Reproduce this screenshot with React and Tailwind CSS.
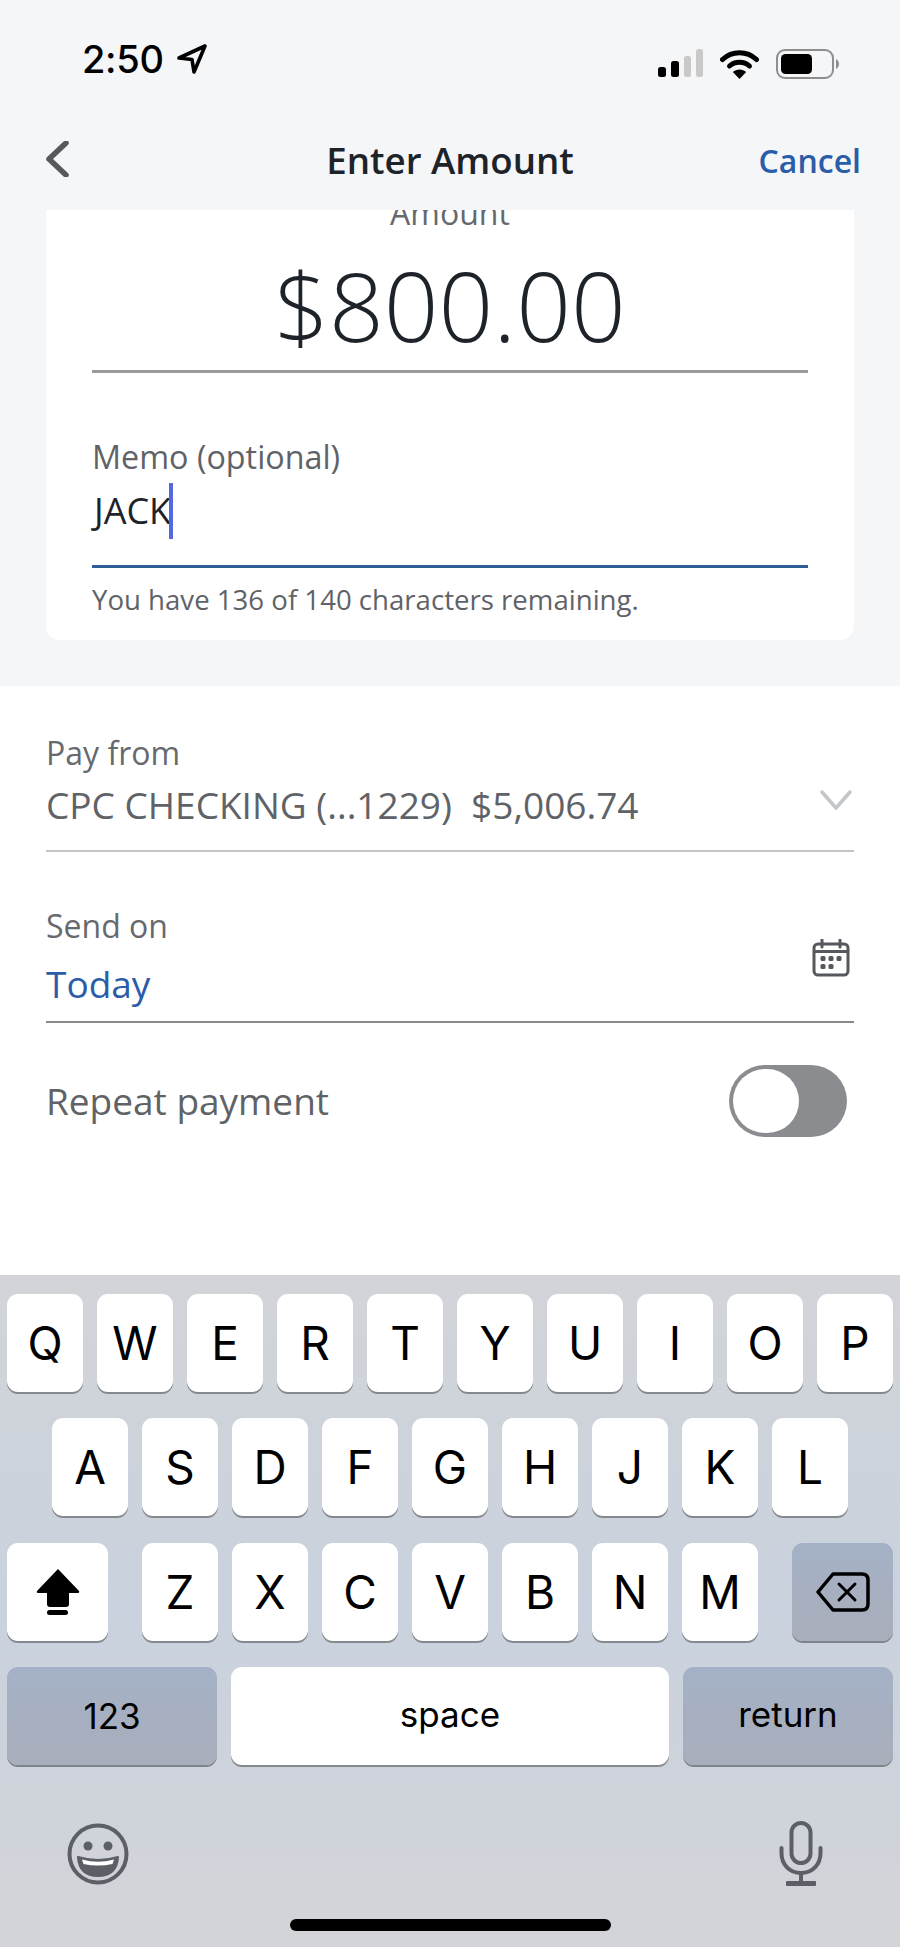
const OS = "font-['Open_Sans',sans-serif]";
const IN = "font-['Inter',sans-serif]";

function Key({ label, className = "w-[76px]" }) {
  return (
    <div className={`${className} h-[98px] shrink-0 flex items-center justify-center rounded-[11px] bg-white shadow-[0_2px_0_#85888d] text-[46px] leading-none text-black ${IN}`}>
      {label}
    </div>
  );
}

function FnKey({ children, className = "" }) {
  return (
    <div className={`${className} h-[98px] shrink-0 flex items-center justify-center rounded-[11px] bg-gradient-to-b from-[#a4b1c6] to-[#a9aebb] shadow-[0_2px_0_#7f838b] text-black ${IN}`}>
      {children}
    </div>
  );
}

function StatusBar() {
  return (
    <div className="h-[105px] flex items-end justify-between pl-[82px] pr-[61px] pb-[26px]">
      <div className="flex items-center gap-[13px]">
        <span className={`text-[38px] leading-[40px] font-medium text-black tracking-[-0.3px] ${IN}`}>2:50</span>
        <svg width="30" height="30" viewBox="0 0 30 30" fill="none">
          <path d="M2 14 L28 2 L17 28 L15 15.5 Z" stroke="#000" strokeWidth="3.6" strokeLinejoin="round" />
        </svg>
      </div>
      <div className="flex items-center gap-[17px]">
        <svg width="45" height="30" viewBox="0 0 45 30">
          <rect x="0" y="18" width="8" height="10" rx="2.5" fill="#000" />
          <rect x="13" y="12" width="8" height="16" rx="2.5" fill="#000" />
          <rect x="26" y="7" width="7" height="21" rx="2.5" fill="#c9c9c9" />
          <rect x="38" y="0" width="7" height="28" rx="2.5" fill="#c9c9c9" />
        </svg>
        <svg width="39" height="30" viewBox="0 0 39 30" fill="none">
          <path d="M2.5 10.5 C12 1.5 27 1.5 36.5 10.5" stroke="#000" strokeWidth="5" strokeLinecap="round" />
          <path d="M9.5 17 C15 12 24 12 29.5 17" stroke="#000" strokeWidth="5" strokeLinecap="round" />
          <path d="M19.5 30 L12.8 23 C16.5 19.6 22.5 19.6 26.2 23 Z" fill="#000" />
        </svg>
        <svg width="63" height="30" viewBox="0 0 63 30" fill="none">
          <rect x="1" y="1" width="56" height="28" rx="8" stroke="#8e8e8e" strokeWidth="2" />
          <rect x="5" y="5" width="31" height="20" rx="4.5" fill="#000" />
          <path d="M60 10 C62 11 63 13 63 15 C63 17 62 19 60 20 Z" fill="#8e8e8e" />
        </svg>
      </div>
    </div>
  );
}

function NavBar() {
  return (
    <div className="relative h-[105px] flex items-start justify-between pl-[45px] pr-[39px] pt-[36px]">
      <svg width="24" height="36" viewBox="0 0 24 36" fill="none">
        <path d="M21 2 L4 18 L21 34" stroke="#565a5e" strokeWidth="5.5" strokeLinecap="round" strokeLinejoin="round" />
      </svg>
      <div className={`absolute left-0 right-0 top-[35px] text-center text-[36.7px] leading-[40px] font-semibold text-[#1d2329] ${OS}`}>Enter Amount</div>
      <div className={`text-[32px] leading-[40px] font-semibold text-[#2a5ca8] ${OS}`}>Cancel</div>
    </div>
  );
}

function AmountCard() {
  return (
    <div className="h-[476px] bg-[#f4f6f8] px-[46px]">
      <div className={`h-[430px] overflow-hidden rounded-b-[14px] bg-white px-[46px] ${OS}`}>
        <div className="mt-[-19px] text-center text-[32px] leading-[44px] text-[#666a6e]">Amount</div>
        <div className="mt-[14px] text-center text-[96px] leading-[112px] font-light text-[#1d2329]">$800.00</div>
        <div className="mt-[9px] h-[3px] bg-[#9a9a9a]" />
        <div className="mt-[61px] text-[32.3px] leading-[44px] text-[#5f6367]">Memo (optional)</div>
        <div className="flex items-center h-[60px] mt-[3px] pl-[2px] text-[36px] leading-[44px] text-[#1d2329]">
          <span>JACK</span>
          <span className="w-[4px] h-[56px] ml-[-2px] bg-[#5468e0]" />
        </div>
        <div className="mt-[24px] h-[3px] bg-[#2d5f96]" />
        <div className="mt-[12px] text-[27.6px] leading-[38px] text-[#5f6367]">You have 136 of 140 characters remaining.</div>
      </div>
    </div>
  );
}

function Form() {
  return (
    <div className={`h-[589px] bg-white px-[46px] pt-[46px] ${OS}`}>
      <div className="text-[32px] leading-[42px] text-[#666a6e]">Pay from</div>
      <div className="mt-[7px] flex items-center justify-between">
        <span className="text-[37px] leading-[48px] text-[#5f6367] whitespace-pre">CPC CHECKING (...1229)  $5,006.74</span>
        <svg className="mr-[2px] mb-[10px]" width="32" height="20" viewBox="0 0 32 20" fill="none">
          <path d="M2 2 L16 18 L30 2" stroke="#c4c7c9" strokeWidth="3.5" strokeLinecap="round" strokeLinejoin="round" />
        </svg>
      </div>
      <div className="mt-[21px] h-[2px] bg-[#c4c4c4]" />
      <div className="relative mt-[53px]">
        <div className="text-[32px] leading-[42px] text-[#666a6e]">Send on</div>
        <div className="mt-[12px] text-[37px] leading-[50px] text-[#2a5ca8]">Today</div>
        <svg className="absolute right-[4px] top-[34px]" width="38" height="38" viewBox="0 0 38 38" fill="none">
          <rect x="2" y="5" width="34" height="31" rx="4" stroke="#55595d" strokeWidth="3" />
          <path d="M2 12.5 H36" stroke="#55595d" strokeWidth="3" />
          <path d="M10 1 V8 M28 1 V8" stroke="#55595d" strokeWidth="3" strokeLinecap="round" />
          <g fill="#55595d">
            <rect x="8.5" y="17" width="5" height="5" rx="1.5" />
            <rect x="16.5" y="17" width="5" height="5" rx="1.5" />
            <rect x="24.5" y="17" width="5" height="5" rx="1.5" />
            <rect x="8.5" y="25" width="5" height="5" rx="1.5" />
            <rect x="16.5" y="25" width="5" height="5" rx="1.5" />
          </g>
        </svg>
      </div>
      <div className="mt-[12px] h-[2px] bg-[#8a8a8a]" />
      <div className="mt-[42px] flex items-center justify-between pr-[7px]">
        <span className="text-[37px] leading-[48px] text-[#5f6367]">Repeat payment</span>
        <div className="w-[118px] h-[72px] rounded-full bg-[#8a8c8f] p-[4px]">
          <div className="w-[66px] h-[64px] rounded-full bg-white" />
        </div>
      </div>
    </div>
  );
}

function Keyboard() {
  const r1 = "QWERTYUIOP".split("");
  const r2 = "ASDFGHJKL".split("");
  const r3 = "ZXCVBNM".split("");
  return (
    <div className="h-[672px] pt-[19px] bg-gradient-to-b from-[#d2d4d8] via-[#c9d2de] to-[#d3d4d8]">
      <div className="flex flex-col gap-[26.4px]">
        <div className="flex gap-[14px] px-[7px]">{r1.map((k) => <Key key={k} label={k} />)}</div>
        <div className="flex gap-[14px] pl-[52px]">{r2.map((k) => <Key key={k} label={k} />)}</div>
        <div className="flex items-center px-[7px]">
          <div className="w-[101px] h-[98px] shrink-0 flex items-center justify-center rounded-[11px] bg-white shadow-[0_2px_0_#85888d]">
            <svg width="44" height="48" viewBox="0 0 44 48">
              <path d="M22 1 L43 23 Q44 25 41 25 H33 V36 Q33 39 30 39 H14 Q11 39 11 36 V25 H3 Q0 25 1 23 Z" fill="#000" />
              <rect x="11" y="42" width="21" height="5" rx="2.5" fill="#000" />
            </svg>
          </div>
          <div className="ml-[34px] flex gap-[14px]">{r3.map((k) => <Key key={k} label={k} />)}</div>
          <FnKey className="ml-[34px] w-[101px]">
            <svg width="54" height="40" viewBox="0 0 54 40" fill="none">
              <path d="M17 2 H46 Q52 2 52 8 V32 Q52 38 46 38 H17 L2 20 Z" stroke="#000" strokeWidth="3.5" strokeLinejoin="round" />
              <path d="M23 12 L39 28 M39 12 L23 28" stroke="#000" strokeWidth="3" strokeLinecap="round" />
            </svg>
          </FnKey>
        </div>
        <div className="flex gap-[14px] px-[7px]">
          <FnKey className="w-[210px] text-[35px]">123</FnKey>
          <div className={`w-[438px] h-[98px] pb-[4px] flex items-center justify-center rounded-[11px] bg-white shadow-[0_2px_0_#85888d] text-[35px] text-black ${IN}`}>space</div>
          <FnKey className="w-[210px] text-[35px] pb-[4px]">return</FnKey>
        </div>
      </div>
      <div className="mt-[56px] flex items-center justify-between pl-[67px] pr-[77px]">
        <svg width="62" height="62" viewBox="0 0 62 62" fill="none">
          <circle cx="31" cy="31" r="28.5" stroke="#5c6066" strokeWidth="4" />
          <circle cx="21" cy="23" r="4.5" fill="#5c6066" />
          <circle cx="41" cy="23" r="4.5" fill="#5c6066" />
          <path d="M11 34 Q31 40 51 34 Q50 53 31 53 Q12 53 11 34 Z" fill="#5c6066" stroke="#5c6066" strokeWidth="2" strokeLinejoin="round" />
          <path d="M15 36.5 Q31 41 47 36.5 L45.5 41 Q31 44 16.5 41 Z" fill="#fff" />
        </svg>
        <svg width="44" height="66" viewBox="0 0 44 66" fill="none">
          <rect x="12.5" y="2" width="19" height="40" rx="9.5" stroke="#5c6066" strokeWidth="4" />
          <path d="M2.5 27 V32 C2.5 43 10 52 22 52 C34 52 41.5 43 41.5 32 V27" stroke="#5c6066" strokeWidth="4" strokeLinecap="round" />
          <path d="M22 52 V62" stroke="#5c6066" strokeWidth="4" />
          <rect x="7" y="60" width="30" height="5" rx="1" fill="#5c6066" />
        </svg>
      </div>
      <div className="mx-auto mt-[32px] w-[321px] h-[12px] rounded-full bg-black" />
    </div>
  );
}

export default function App() {
  return (
    <div className="w-[900px] h-[1947px] overflow-hidden bg-white">
      <div className="h-[210px] bg-[#f4f6f8]">
        <StatusBar />
        <NavBar />
      </div>
      <AmountCard />
      <Form />
      <Keyboard />
    </div>
  );
}
